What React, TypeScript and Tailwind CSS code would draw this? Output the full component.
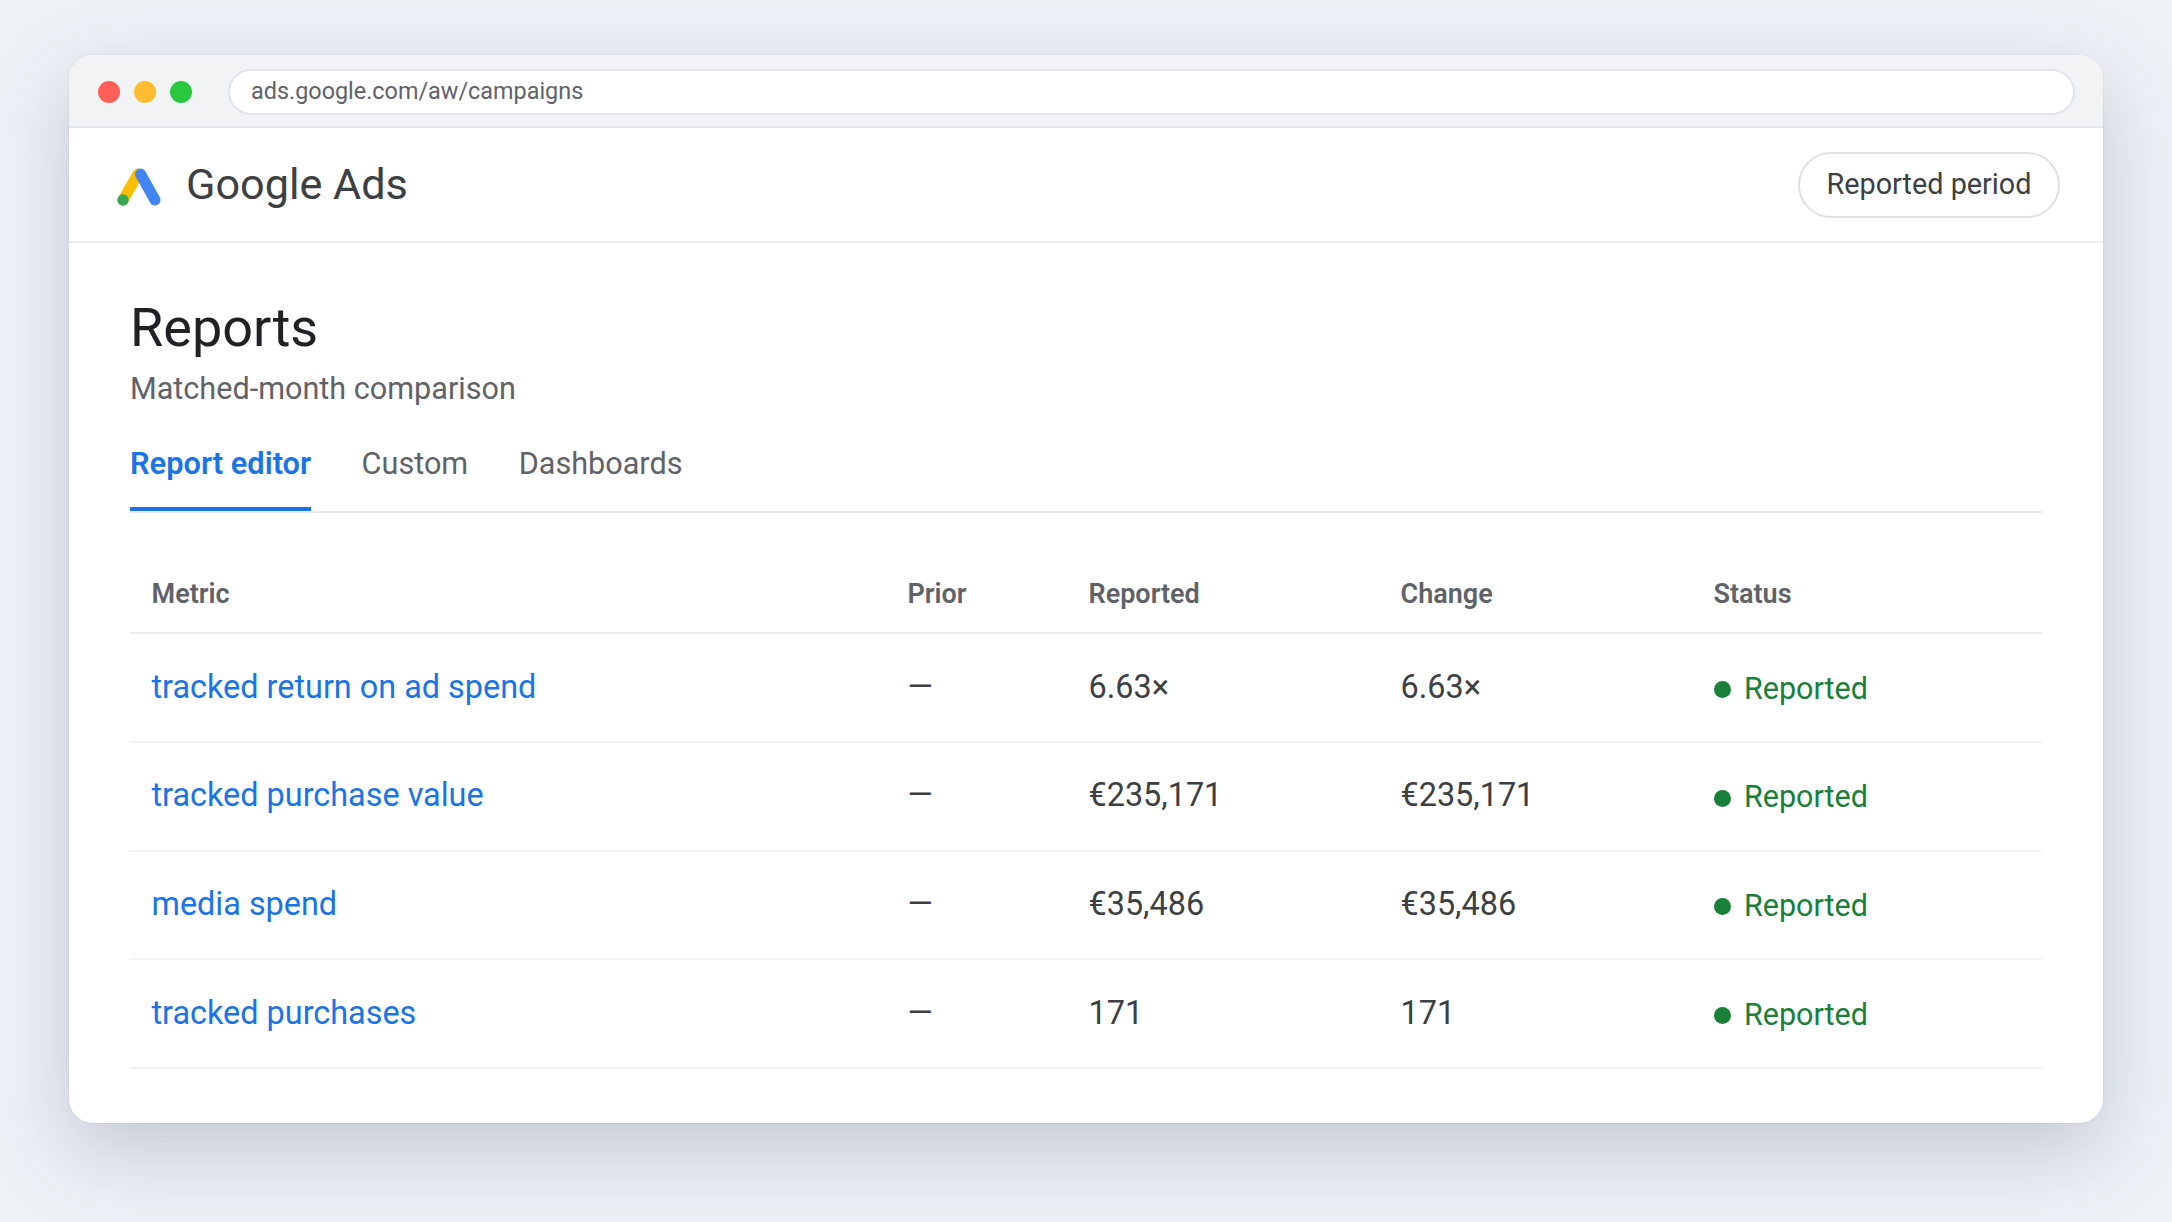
const rows = [
  { metric: 'tracked return on ad spend', reported: '6.63×', change: '6.63×' },
  { metric: 'tracked purchase value', reported: '€235,171', change: '€235,171' },
  { metric: 'media spend', reported: '€35,486', change: '€35,486' },
  { metric: 'tracked purchases', reported: '171', change: '171' },
]

function AdsLogo() {
  return (
    <svg width="44" height="38" viewBox="0 0 44 38" fill="none" className="shrink-0 mt-[5px]">
      <line x1="6" y1="32" x2="21" y2="6" stroke="#fbbc04" strokeWidth="11" strokeLinecap="round" />
      <line x1="23.5" y1="6" x2="38" y2="32" stroke="#4285f4" strokeWidth="11" strokeLinecap="round" />
      <circle cx="6" cy="32" r="5.7" fill="#34a853" />
    </svg>
  )
}

export default function App() {
  return (
    <div className="w-[2172px] h-[1222px] overflow-hidden bg-[#eef1f6] pt-[55px] pl-[69px] font-['Roboto',sans-serif]">
      <div className="w-[2034px] h-[1068px] rounded-[24px] bg-white overflow-hidden shadow-[0_0_0_1px_rgba(70,82,115,0.05),0_28px_80px_rgba(70,82,115,0.26)]">
        {/* browser bar */}
        <div className="h-[73px] bg-[#f1f3f5] border-b-2 border-[#e3e6ea] flex items-center pt-[2px] pl-[29px] pr-[28px]">
          <div className="flex gap-[14px]">
            <span className="w-[22px] h-[22px] rounded-full bg-[#ff5f57]" />
            <span className="w-[22px] h-[22px] rounded-full bg-[#febc2e]" />
            <span className="w-[22px] h-[22px] rounded-full bg-[#28c840]" />
          </div>
          <div className="ml-[36px] flex-1 h-[46px] rounded-full bg-white border-2 border-[#e3e5ea] flex items-center pl-[21px] text-[23.4px] text-[#5f6368]">
            ads.google.com/aw/campaigns
          </div>
        </div>

        {/* app header */}
        <div className="h-[115px] border-b-2 border-[#eceef0] flex items-center justify-between pl-[48px] pr-[43px]">
          <div className="flex items-center gap-[25px]">
            <AdsLogo />
            <span className="text-[43.2px] text-[#3c4043] mt-[2px]">Google Ads</span>
          </div>
          <button className="h-[66px] w-[262px] rounded-full border-2 border-[#dfe1e5] text-[28.8px] text-[#3c4043]">Reported period</button>
        </div>

        <div className="px-[61px] pt-[51px]">
          <h1 className="text-[54px] leading-[68px] text-[#202124]">Reports</h1>
          <p className="text-[30.6px] leading-[40px] mt-[7px] text-[#5f6368]">Matched-month comparison</p>

          {/* tabs */}
          <div className="mt-[33px] flex gap-[50.5px] border-b-2 border-[#e8eaed] h-[71px]">
            <div className="h-[69px] border-b-[4.5px] border-[#1a73e8] text-[30.8px] leading-[43px] font-semibold text-[#1a73e8]">Report editor</div>
            <div className="text-[30.6px] leading-[43px] text-[#5f6368]">Custom</div>
            <div className="text-[30.6px] leading-[43px] text-[#5f6368]">Dashboards</div>
          </div>

          {/* table */}
          <div className="mt-[38px]">
            <div className="grid grid-cols-[756px_181px_312px_313px_1fr] h-[83px] items-center border-b-2 border-[#eceef0] pt-[5px] text-[27px] font-semibold text-[#5f6368]">
              <div className="pl-[21.5px]">Metric</div>
              <div className="pl-[21.5px]">Prior</div>
              <div className="pl-[21.5px]">Reported</div>
              <div className="pl-[21.5px]">Change</div>
              <div className="pl-[21.5px]">Status</div>
            </div>
            {rows.map((r) => (
              <div key={r.metric} className="grid grid-cols-[756px_181px_312px_313px_1fr] h-[108.8px] items-center border-b-2 border-[#f1f3f4] text-[32.4px] text-[#3c4043]">
                <div className="pl-[21.5px] pb-[1px] text-[#1a73e8]">{r.metric}</div>
                <div className="pl-[21.5px] pb-[1px]">—</div>
                <div className="pl-[21.5px] pb-[1px]">{r.reported}</div>
                <div className="pl-[21.5px] pb-[1px]">{r.change}</div>
                <div className="pl-[22px] pt-[2px] flex items-center gap-[13px] text-[30.5px] text-[#188038]">
                  <span className="w-[17px] h-[17px] mt-[2px] rounded-full bg-[#188038]" />
                  Reported
                </div>
              </div>
            ))}
          </div>
        </div>
      </div>
    </div>
  )
}
